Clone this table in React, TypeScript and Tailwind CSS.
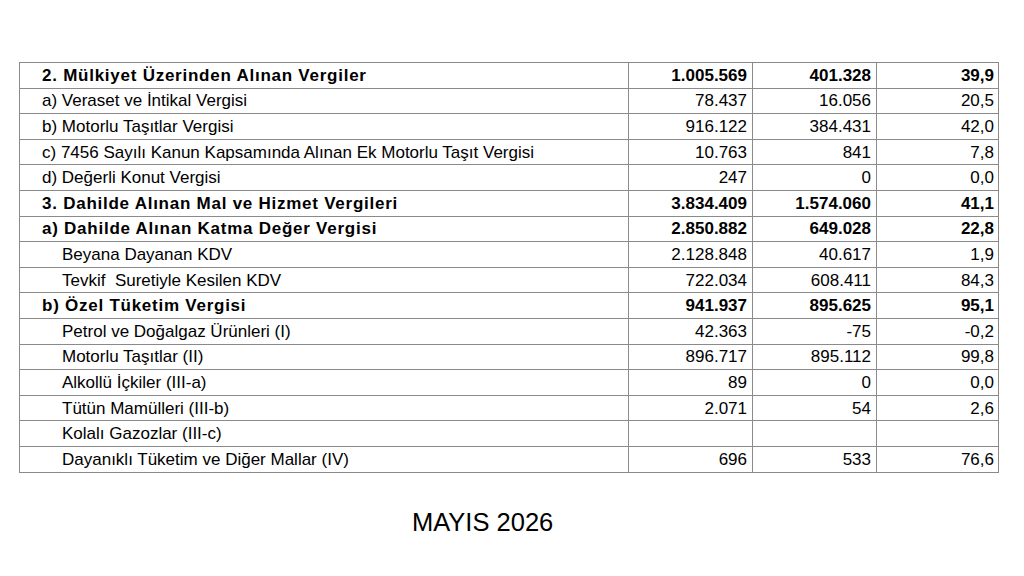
import React from "react";

type Row = {
  label: string;
  a: string;
  b: string;
  c: string;
  bold?: boolean;
  indent?: boolean;
};

const rows: Row[] = [
  { label: "2. Mülkiyet Üzerinden Alınan Vergiler", a: "1.005.569", b: "401.328", c: "39,9", bold: true },
  { label: "a) Veraset ve İntikal Vergisi", a: "78.437", b: "16.056", c: "20,5" },
  { label: "b) Motorlu Taşıtlar Vergisi", a: "916.122", b: "384.431", c: "42,0" },
  { label: "c) 7456 Sayılı Kanun Kapsamında Alınan Ek Motorlu Taşıt Vergisi", a: "10.763", b: "841", c: "7,8" },
  { label: "d) Değerli Konut Vergisi", a: "247", b: "0", c: "0,0" },
  { label: "3. Dahilde Alınan Mal ve Hizmet Vergileri", a: "3.834.409", b: "1.574.060", c: "41,1", bold: true },
  { label: "a) Dahilde Alınan Katma Değer Vergisi", a: "2.850.882", b: "649.028", c: "22,8", bold: true },
  { label: "Beyana Dayanan KDV", a: "2.128.848", b: "40.617", c: "1,9", indent: true },
  { label: "Tevkif  Suretiyle Kesilen KDV", a: "722.034", b: "608.411", c: "84,3", indent: true },
  { label: "b) Özel Tüketim Vergisi", a: "941.937", b: "895.625", c: "95,1", bold: true },
  { label: "Petrol ve Doğalgaz Ürünleri (I)", a: "42.363", b: "-75", c: "-0,2", indent: true },
  { label: "Motorlu Taşıtlar (II)", a: "896.717", b: "895.112", c: "99,8", indent: true },
  { label: "Alkollü İçkiler (III-a)", a: "89", b: "0", c: "0,0", indent: true },
  { label: "Tütün Mamülleri (III-b)", a: "2.071", b: "54", c: "2,6", indent: true },
  { label: "Kolalı Gazozlar (III-c)", a: "", b: "", c: "", indent: true },
  { label: "Dayanıklı Tüketim ve Diğer Mallar (IV)", a: "696", b: "533", c: "76,6", indent: true },
];

export default function App() {
  return (
    <div
      className="w-[1024px] h-[576px] bg-white text-black overflow-hidden"
      style={{ fontFamily: '"Liberation Sans", Arial, sans-serif' }}
    >
      <div className="pt-[62px] pl-[19px]">
        <table className="table-fixed border-collapse w-[979px] text-[17px] leading-none">
          <colgroup>
            <col className="w-[609px]" />
            <col className="w-[124px]" />
            <col className="w-[124px]" />
            <col className="w-[122px]" />
          </colgroup>
          <tbody>
            {rows.map((r, i) => (
              <tr key={i} className="h-[25.6px]">
                <td
                  className={
                    "border border-[#8a8a8a] p-0 whitespace-pre " +
                    (r.indent ? "pl-[42px] " : "pl-[22px] ") +
                    (r.bold ? "font-bold tracking-[0.75px]" : "font-normal")
                  }
                >
                  {r.label}
                </td>
                <td className={"border border-[#8a8a8a] p-0 pr-[5px] text-right " + (r.bold ? "font-bold" : "font-normal")}>
                  {r.a}
                </td>
                <td className={"border border-[#8a8a8a] p-0 pr-[5px] text-right " + (r.bold ? "font-bold" : "font-normal")}>
                  {r.b}
                </td>
                <td className={"border border-[#8a8a8a] p-0 pr-[4px] text-right " + (r.bold ? "font-bold" : "font-normal")}>
                  {r.c}
                </td>
              </tr>
            ))}
          </tbody>
        </table>
      </div>
      <div className="mt-[34px] pl-[412px] text-[25.5px] leading-[30px]">MAYIS 2026</div>
    </div>
  );
}
